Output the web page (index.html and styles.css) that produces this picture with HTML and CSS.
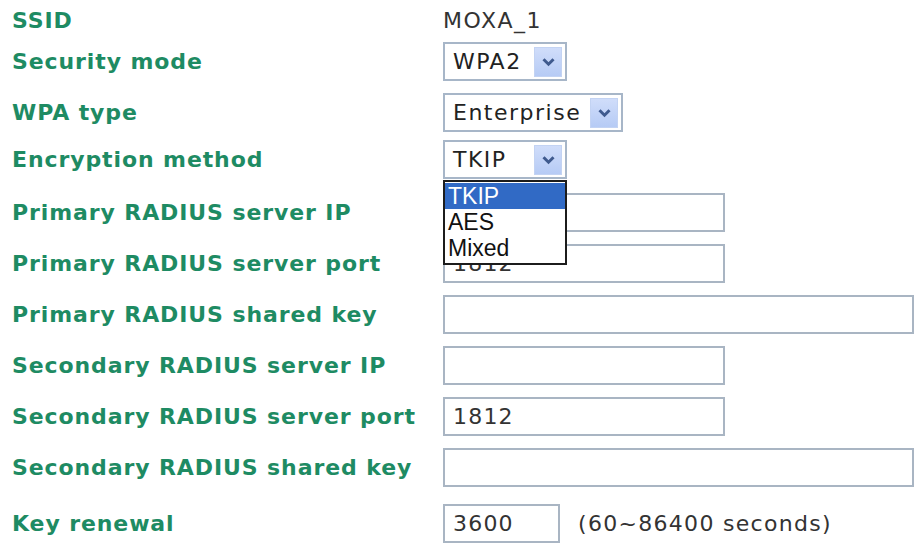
FILE: index.html
```html
<!DOCTYPE html>
<html>
<head>
<meta charset="utf-8">
<link rel="stylesheet" href="styles.css">
</head>
<body>
<div class="form">
  <div class="row row-ssid">
    <div class="label">SSID</div>
    <div class="value">MOXA_1</div>
  </div>
  <div class="row row-sec">
    <div class="label">Security mode</div>
    <div class="select w-sm"><span class="sel-text">WPA2</span><span class="arrow"><svg viewBox="0 0 12 8" width="15" height="10"><path d="M2 1.8 L6 5.8 L10 1.8" fill="none" stroke="#3f5a8e" stroke-width="2.4"/></svg></span></div>
  </div>
  <div class="row">
    <div class="label">WPA type</div>
    <div class="select w-md"><span class="sel-text">Enterprise</span><span class="arrow"><svg viewBox="0 0 12 8" width="15" height="10"><path d="M2 1.8 L6 5.8 L10 1.8" fill="none" stroke="#3f5a8e" stroke-width="2.4"/></svg></span></div>
  </div>
  <div class="row row-enc">
    <div class="label">Encryption method</div>
    <div class="select w-sm open"><span class="sel-text">TKIP</span><span class="arrow"><svg viewBox="0 0 12 8" width="15" height="10"><path d="M2 1.8 L6 5.8 L10 1.8" fill="none" stroke="#3f5a8e" stroke-width="2.4"/></svg></span>
      <div class="list">
        <div class="opt selected">TKIP</div>
        <div class="opt">AES</div>
        <div class="opt">Mixed</div>
      </div>
    </div>
  </div>
  <div class="row row-ip">
    <div class="label">Primary RADIUS server IP</div>
    <input class="field w-mid" type="text" value="">
  </div>
  <div class="row">
    <div class="label">Primary RADIUS server port</div>
    <input class="field w-mid" type="text" value="1812">
  </div>
  <div class="row">
    <div class="label">Primary RADIUS shared key</div>
    <input class="field w-wide" type="text" value="">
  </div>
  <div class="row">
    <div class="label">Secondary RADIUS server IP</div>
    <input class="field w-mid" type="text" value="">
  </div>
  <div class="row">
    <div class="label">Secondary RADIUS server port</div>
    <input class="field w-mid" type="text" value="1812">
  </div>
  <div class="row">
    <div class="label">Secondary RADIUS shared key</div>
    <input class="field w-wide" type="text" value="">
  </div>
  <div class="row row-key">
    <div class="label">Key renewal</div>
    <div class="ctrl-line">
      <input class="field w-xs" type="text" value="3600">
      <span class="hint">(60~86400 seconds)</span>
    </div>
  </div>
</div>
</body>
</html>
```
FILE: styles.css
```css
html, body {
  margin: 0;
  padding: 0;
  background: #ffffff;
}
.form {
  display: flex;
  flex-direction: column;
  gap: 12px;
  padding-left: 12px;
  font-family: "DejaVu Sans", Verdana, sans-serif;
}
.row {
  display: grid;
  grid-template-columns: 431px 1fr;
  align-items: center;
  height: 39px;
}
.row-ssid { height: 40px; margin-bottom: -10px; }
.row-enc { margin-top: -4px; }
.row-ip { margin-top: 2px; }
.row-key { margin-top: 5px; }
.label {
  color: #1e8b63;
  font-weight: bold;
  font-size: 22px;
  letter-spacing: 0.9px;
  white-space: nowrap;
}
.value {
  color: #333;
  font-size: 22px;
  letter-spacing: 1.5px;
}
.select {
  position: relative;
  box-sizing: border-box;
  height: 39px;
  border: 2px solid #a7b6c8;
  background: #fff;
  display: flex;
  align-items: center;
  justify-content: space-between;
  padding: 0 3px 0 8px;
}
.w-sm { width: 124px; }
.w-md { width: 180px; }
.sel-text {
  color: #222;
  font-size: 22px;
  letter-spacing: 1.5px;
}
.arrow {
  width: 28px;
  height: 30px;
  background: linear-gradient(#d0ddfa, #b6cbf5);
  border: 1px solid #c3d3f3;
  box-sizing: border-box;
  display: flex;
  align-items: center;
  justify-content: center;
}
.list {
  position: absolute;
  left: -2px;
  top: 38px;
  width: 124px;
  box-sizing: border-box;
  border: 2px solid #1c1c1c;
  background: #fff;
  padding: 1px 0 2px;
  z-index: 5;
  font-family: "Liberation Sans", Arial, sans-serif;
  font-size: 23px;
}
.opt {
  height: 26px;
  line-height: 26px;
  padding-left: 3px;
  color: #111;
}
.opt.selected {
  background: #316ac5;
  color: #fff;
}
.field {
  box-sizing: border-box;
  height: 39px;
  margin: 0;
  border: 2px solid #a9b5c3;
  background: #fff;
  padding: 0 8px;
  font-family: "DejaVu Sans", Verdana, sans-serif;
  font-size: 22px;
  letter-spacing: 1.2px;
  color: #333;
  outline: none;
}
.w-mid { width: 282px; }
.w-wide { width: 471px; }
.w-xs { width: 117px; }
.ctrl-line {
  display: flex;
  align-items: center;
  gap: 18px;
}
.hint {
  color: #333;
  font-size: 22px;
  letter-spacing: 1.3px;
}
```
